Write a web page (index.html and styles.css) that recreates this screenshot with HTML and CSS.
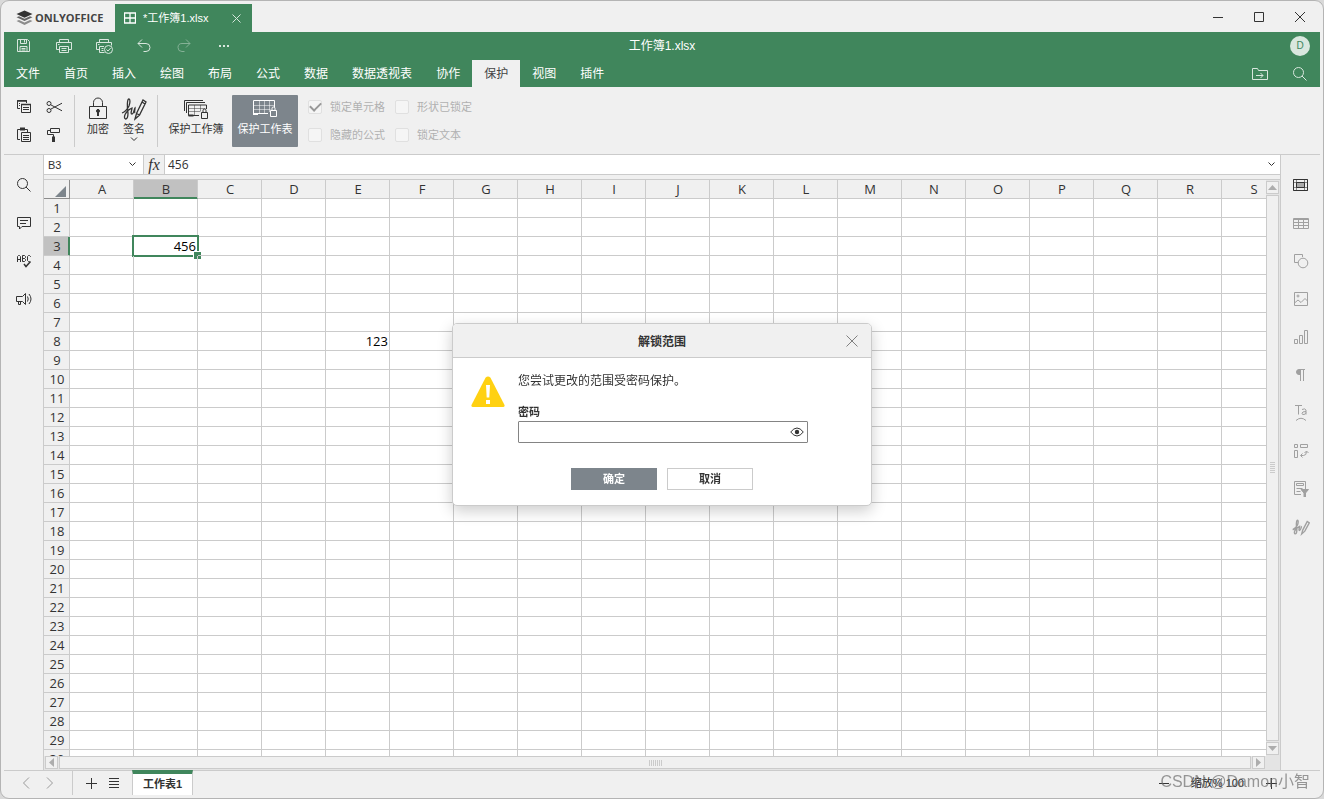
FILE: index.html
```html
<!DOCTYPE html>
<html lang="zh-CN">
<head>
<meta charset="utf-8">
<title>工作簿1.xlsx</title>
<link rel="stylesheet" href="styles.css">
</head>
<body>
<div class="window">
  <header class="titlebar">
    <div class="brand">
      <svg width="17" height="16" viewBox="0 0 17 16"><path d="M8.500 0.500 16.500 4 8.500 7.800 0.500 4z" fill="#333"/><path d="M0.500 7.300 3 6.200l5.500 2.500L14 6.200l2.500 1.100-8 3.800z" fill="#666"/><path d="M0.500 11 3 9.900l5.500 2.500L14 9.900l2.500 1.100-8 3.900z" fill="#8c8c8c"/></svg>
      <span>ONLYOFFICE</span>
    </div>
    <div class="doc-tab">
      <svg width="12" height="12" viewBox="0 0 12 12" fill="none" stroke="#fff"><path d="M.5 1h11v10H.5zM6 1v10M.5 6h11" stroke-width="1.300"/></svg>
      <span>*工作簿1.xlsx</span>
      <button class="tab-close" aria-label="关闭标签"><svg width="9" height="9" viewBox="0 0 9 9" fill="none" stroke="#d5e6dc"><path d="M.5.5l8 8M8.500.5l-8 8"/></svg></button>
    </div>
    <div class="win-controls">
      <button aria-label="最小化"><svg width="12" height="12" viewBox="0 0 12 12" fill="none" stroke="#333"><path d="M1 6.500h10"/></svg></button>
      <button aria-label="最大化"><svg width="12" height="12" viewBox="0 0 12 12" fill="none" stroke="#333"><path d="M1.500 1.500h9v9h-9z"/></svg></button>
      <button aria-label="关闭"><svg width="12" height="12" viewBox="0 0 12 12" fill="none" stroke="#333"><path d="M1 1l10 10M11 1L1 11"/></svg></button>
    </div>
  </header>

  <div class="ribbon-head">
    <div class="quick-row">
      <div class="quick-tools">
        <button aria-label="保存"><svg width="18" height="16" viewBox="0 0 18 16"><path d="M2.500 1.500h10l2 2v10h-12zM5.500 1.500v4h6v-4M9.500 2v2.500M5 13.500v-5h7v5M6.500 10.500h4M6.500 12h4"/></svg></button>
        <button aria-label="打印"><svg width="18" height="16" viewBox="0 0 18 16"><path d="M4.500 4.500v-3h9v3M4.500 11.500h-3v-7h15v7h-3M4.500 8.500h9v6h-9zM3 6.500h1.500M6.500 10.500h5M6.500 12.500h5"/></svg></button>
        <button aria-label="快速打印"><svg width="18" height="16" viewBox="0 0 18 16"><path d="M4.500 4.500v-3h9v3M4.500 11.500h-3v-7h15v3M9 8.500H4.500v6h5M3 6.500h1.500M6.500 10.500h2M6.500 12.500h2"/><circle cx="13.500" cy="11.500" r="4"/><path d="M11.500 11.500l1.500 1.500 2.700-3"/></svg></button>
        <button aria-label="撤消"><svg width="18" height="16" viewBox="0 0 18 16"><path d="M7 1.500 3 5.500l4 4M3 5.500h8a4 4 0 0 1 4 4v0a4 4 0 0 1-4 4H8.500"/></svg></button>
        <button class="dim" aria-label="重做"><svg width="18" height="16" viewBox="0 0 18 16"><path d="M11 1.500l4 4-4 4M15 5.500H7a4 4 0 0 0-4 4v0a4 4 0 0 0 4 4h2.500"/></svg></button>
        <button aria-label="更多"><svg width="18" height="16" viewBox="0 0 18 16"><path d="M4 8h2M8 8h2M12 8h2" stroke-width="2"/></svg></button>
      </div>
      <div class="doc-title">工作簿1.xlsx</div>
      <div class="user"><span class="avatar">D</span></div>
    </div>
    <nav class="menu-row">
      <button>文件</button><button>首页</button><button>插入</button><button>绘图</button><button>布局</button><button>公式</button><button>数据</button><button>数据透视表</button><button>协作</button><button class="active">保护</button><button>视图</button><button>插件</button>
      <div class="menu-tools">
        <button aria-label="打开文件位置"><svg width="18" height="16" viewBox="0 0 18 16"><path d="M1.500 13.500v-11h5l1 2h9v9zM5 9.500h7M9.500 7l2.500 2.500L9.500 12"/></svg></button>
        <button aria-label="查找"><svg width="16" height="16" viewBox="0 0 16 16"><circle cx="6.500" cy="6.500" r="5"/><path d="M10 10l4.500 4.500"/></svg></button>
      </div>
    </nav>
  </div>

  <div class="toolbar">
    <div class="clip-group">
      <button aria-label="复制"><svg width="16" height="16" viewBox="0 0 16 16"><path d="M4 9.500H1.500v-8h9V4M3 4.500h1M3 6.500h1M5.500 5.500h9v8h-9zM7 8.500h6M7 10.500h6"/><path d="M1 2h10M5 5.500h10" stroke-width="1.500"/></svg></button>
      <button aria-label="剪切"><svg width="16" height="16" viewBox="0 0 16 16"><circle cx="3" cy="4.500" r="2"/><circle cx="3" cy="11.500" r="2"/><path d="M4.700 5.800 16 11.800M4.700 10.200 16 4.200"/></svg></button>
      <button aria-label="粘贴"><svg width="16" height="16" viewBox="0 0 16 16"><path d="M4 12.500H1.500v-10h10V5M5.500 5.500h9v9h-9zM7 8.500h6M7 10.500h6M7 12.500h6"/><path d="M4 2h5" stroke-width="3"/></svg></button>
      <button aria-label="复制样式"><svg width="16" height="16" viewBox="0 0 16 16"><path d="M4.500 1.500h9v4h-9zM4 3.500H1.500v4h6V10"/><path d="M7.500 9.500v5.500" stroke-width="3"/></svg></button>
    </div>
    <div class="tool-group">
      <button class="tool narrow"><svg width="20" height="24" viewBox="0 0 20 24"><path d="M1.500 9.500h17v12h-17zM5.500 9V5.500a4.500 4.500 0 0 1 9 0V9"/><path d="M10 12v7" stroke-width="2"/><circle cx="10" cy="14" r="1.500" fill="#333"/></svg><span>加密</span></button>
      <button class="tool narrow"><svg width="26" height="24" viewBox="0 0 26 24"><path stroke-width="1.300" d="M1 16c3-1 5-3 7-7 1.500-4 1-7 0-7-2 0-2 8-1 14 0 3-1 6-2.500 6C2 21 4 14 11 11c0 2-2 6 0 6s2-5 3-6c0 2-1 4 0 5M14 22l1.500-5.500L22 3l3 2-6.500 13zM21 5l3 2M15.500 16.500l3 1.500"/></svg><span>签名</span><svg width="8" height="5" viewBox="0 0 8 5"><path d="M1 .5l3 3 3-3"/></svg></button>
    </div>
    <div class="tool-group wide-group">
      <button class="tool"><svg width="28" height="24" viewBox="0 0 28 24"><path d="M2.500 14V3.500H21M4.500 16V5.500H23M17 18.500H6.500V8h18v4"/><path d="M6.500 11.500h17M6.500 14.500h12M12.500 8v10M18.500 8v6" opacity=".5"/><path d="M19.500 15.500h6v6h-6zM21 15.500v-2a1.500 1.500 0 0 1 3 0v2"/><path d="M6.500 18.500h5" stroke-width="2"/></svg><span>保护工作簿</span></button>
      <button class="tool pressed"><svg width="28" height="24" viewBox="0 0 28 24"><path d="M3 8.500h20M2.500 12.500h17M8.500 4v12M13.500 4v13M18.500 4v11" opacity=".5"/><path d="M17 16.500H2.500v-13h21v7M19.500 13.500h6v6h-6zM21 13.500v-2a1.500 1.500 0 0 1 3 0v2"/><path d="M2 17h5" stroke-width="2"/></svg><span>保护工作表</span></button>
    </div>
    <div class="checks">
      <label><input type="checkbox" checked disabled>锁定单元格</label>
      <label><input type="checkbox" disabled>形状已锁定</label>
      <label><input type="checkbox" disabled>隐藏的公式</label>
      <label><input type="checkbox" disabled>锁定文本</label>
    </div>
  </div>

  <div class="workspace">
    <aside class="side left">
      <button aria-label="查找"><svg width="16" height="16" viewBox="0 0 16 16"><circle cx="6.500" cy="6.500" r="5"/><path d="M10 10l4.500 4.500"/></svg></button>
      <button aria-label="批注"><svg width="16" height="16" viewBox="0 0 16 16"><path d="M1.500 2.500h13v9H6L3.500 14v-2.500h-2zM4 5.500h8M4 8.500h6"/></svg></button>
      <button aria-label="拼写检查"><svg width="16" height="16" viewBox="0 0 16 16"><path d="M1.500 9V3.500l1-1h1l1 1V9M1.500 6.500h3M6.500 2.500v6h2l1-1v-1l-1-1 1-1v-1l-1-1zM6.500 5.500h2M14.500 4v-.5l-1-1h-1l-1 1v4l1 1h1"/><path stroke-width="1.500" d="M8 11l2 2.500 4.500-5"/></svg></button>
      <button aria-label="反馈"><svg width="16" height="16" viewBox="0 0 16 16"><path d="M.5 5.500h6l3-3v11l-3-3h-6zM2.500 10.500v3h2v-3M11.500 5.500q1.500 2.500 0 5M13 3q4 5 0 10"/></svg></button>
    </aside>

    <main class="center">
      <div class="formula-bar">
        <div class="name-box"><input aria-label="名称框" value="B3"><svg width="7" height="5" viewBox="0 0 7 5"><path d="M.5.5l3 3 3-3"/></svg></div>
        <button class="fx">fx</button>
        <input class="formula" aria-label="编辑栏" value="456">
        <button class="expand" aria-label="展开编辑栏"><svg width="7" height="5" viewBox="0 0 7 5"><path d="M.5.5l3 3 3-3"/></svg></button>
      </div>
      <div class="sheet-area">
        <div class="grid-view"><table class="grid" id="grid"></table></div>
        <div class="vscroll">
          <button aria-label="向上滚动"><svg width="9" height="5" viewBox="0 0 9 5"><path d="M0 5 4.500 0 9 5z"/></svg></button>
          <div class="thumb"><span class="grip"></span></div>
          <button aria-label="向下滚动"><svg width="9" height="5" viewBox="0 0 9 5"><path d="M0 0h9L4.500 5z"/></svg></button>
        </div>
        <div class="hscroll">
          <button aria-label="向左滚动"><svg width="5" height="9" viewBox="0 0 5 9"><path d="M5 0v9L0 4.500z"/></svg></button>
          <div class="thumb"><span class="grip"></span></div>
          <button aria-label="向右滚动"><svg width="5" height="9" viewBox="0 0 5 9"><path d="M0 0v9l5-4.500z"/></svg></button>
        </div>
      </div>
    </main>

    <aside class="side right">
      <button class="on" aria-label="单元格设置"><svg width="16" height="16" viewBox="0 0 16 16"><path d="M.5 2.500h14v11H.5zM3.500 2.500v11M11.500 2.500v11M.5 5.500h14M.5 10.500h14" stroke-opacity=".55"/><path d="M.5 2.500h14v11H.5z"/><path d="M3.500 5.500h8v5h-8z" fill="#aaa"/></svg></button>
      <button aria-label="表格设置"><svg width="16" height="16" viewBox="0 0 16 16"><path d="M.5 3.500h15v10H.5zM.5 7.500h15M.5 10.500h15M5.500 3.500v10M10.500 3.500v10M.5 4.500h15"/></svg></button>
      <button aria-label="形状设置"><svg width="16" height="16" viewBox="0 0 16 16"><path d="M5 9.500H1.500v-8h8V4"/><circle cx="10" cy="10" r="4.800"/></svg></button>
      <button aria-label="图像设置"><svg width="16" height="16" viewBox="0 0 16 16"><path d="M1.500 1.500h13v13h-13zM1.500 12l3.500-3 3 2.500 4-4 2.500 2.500"/><circle cx="5" cy="5" r="1"/></svg></button>
      <button aria-label="图表设置"><svg width="16" height="16" viewBox="0 0 16 16"><path d="M1.500 10.500h3v4h-3zM6.500 6.500h3v8h-3zM11.500 1.500h3v13h-3z"/></svg></button>
      <button aria-label="段落设置"><svg width="16" height="16" viewBox="0 0 16 16"><path d="M7.500 2v12M10.500 2v12M6 2.500h6"/><path d="M7.500 2.500v5H6a2.500 2.500 0 0 1 0-5z" fill="#a0a0a0"/></svg></button>
      <button aria-label="艺术字设置"><svg width="16" height="18" viewBox="0 0 16 18"><path d="M2 1.500h7M5.500 1.500v9M9 5.500q3-1.500 4 .5v4.500M13 7.500q-4 0-4 1.700t2 1.300q2-.5 2-2M3 16.500q5-4.500 10 0"/></svg></button>
      <button aria-label="数据透视表设置"><svg width="16" height="16" viewBox="0 0 16 16"><path d="M1.500 1.500h3v3h-3zM7.500 1.500h7v3h-7zM1.500 7.500h3v7h-3zM8 12.500h2.500q3 0 3-4M9.500 10.500l-2 2 2 2M11.500 10l2-2 2 2"/></svg></button>
      <button aria-label="切片器设置"><svg width="16" height="16" viewBox="0 0 16 16"><path d="M8 13.500H1.500v-13h11V8M3.500 2.500h7v2h-7zM3.500 7.500h6M3.500 10.500h4"/><path d="M8 8.500h7.500L12.500 12v4h-1.500v-4z" fill="#a0a0a0"/></svg></button>
      <button aria-label="签名设置"><svg width="18" height="18" viewBox="0 0 26 24"><path stroke-width="2" d="M1 16c3-1 5-3 7-7 1.500-4 1-7 0-7-2 0-2 8-1 14 0 3-1 6-2.500 6C2 21 4 14 11 11c0 2-2 6 0 6s2-5 3-6M14 22l1.500-5.500L22 4l3 2-6.500 12z"/></svg></button>
    </aside>
  </div>

  <footer class="statusbar">
    <div class="sheet-nav">
      <button aria-label="上一工作表"><svg width="8" height="12" viewBox="0 0 8 12"><path d="M7 .5 1.500 6 7 11.500"/></svg></button>
      <button aria-label="下一工作表"><svg width="8" height="12" viewBox="0 0 8 12"><path d="M1 .5 6.500 6 1 11.500"/></svg></button>
    </div>
    <div class="sheet-add">
      <button aria-label="添加工作表"><svg width="12" height="12" viewBox="0 0 12 12"><path d="M6.500 1v11M1 6.500h11"/></svg></button>
      <button aria-label="工作表列表"><svg width="12" height="12" viewBox="0 0 12 12"><path d="M1 1.500h10M1 4.500h10M1 7.500h10M1 10.500h10"/></svg></button>
    </div>
    <button class="sheet-tab">工作表1</button>
    <div class="zoom">
      <button aria-label="缩小"><svg width="12" height="12" viewBox="0 0 12 12"><path d="M1 6.500h10"/></svg></button>
      <span>缩放% 100</span>
      <button aria-label="放大"><svg width="12" height="12" viewBox="0 0 12 12"><path d="M6.500 1v11M1 6.500h11"/></svg></button>
    </div>
  </footer>
</div>

<div class="overlay">
  <form class="dialog" role="dialog" aria-labelledby="dlg-title">
    <div class="dialog-head">
      <h2 id="dlg-title">解锁范围</h2>
      <button type="button" class="dialog-close" aria-label="关闭"><svg width="12" height="12" viewBox="0 0 12 12" fill="none" stroke="#808080"><path d="M.5.5l11 11M11.500.5l-11 11"/></svg></button>
    </div>
    <div class="dialog-body">
      <svg class="warn" width="36" height="32" viewBox="0 0 36 32"><path d="M15.500 1.800q2.500-2.600 5 0L34.500 29q.5 2-1.500 2H3q-2 0-1.500-2z" fill="#ffd112"/><path d="M16 9h4l-.7 12.500h-2.600zM16 24h4v4h-4z" fill="#fff"/></svg>
      <div class="dialog-fields">
        <p>您尝试更改的范围受密码保护。</p>
        <label for="pwd">密码</label>
        <div class="pwd-box"><input type="password" id="pwd"><button type="button" aria-label="显示密码"><svg width="14" height="10" viewBox="0 0 14 10" fill="none" stroke="#333"><path d="M.7 5q6.300-8 12.600 0-6.300 8-12.600 0z"/><circle cx="7" cy="5" r="2.200" fill="#333" stroke="none"/></svg></button></div>
      </div>
    </div>
    <div class="dialog-actions"><button class="primary">确定</button><button type="button">取消</button></div>
  </form>
</div>
<div class="watermark">CSDN @Damon小智</div>
<script src="grid.js"></script>
</body>
</html>
```
FILE: styles.css
```css
* { box-sizing: border-box; }
body {
  margin: 0;
  background: #d9d9d9;
  color: #333;
  font: 11px/16px "Liberation Sans", "Noto Sans CJK SC", sans-serif;
}
button {
  display: flex;
  align-items: center;
  justify-content: center;
  margin: 0;
  padding: 0;
  border: 0;
  background: none;
  color: inherit;
  font: inherit;
}
input { min-width: 0; margin: 0; padding: 0; border: 0; outline: 0; background: none; color: inherit; font: inherit; }
svg { display: block; flex: none; }

.window {
  display: flex;
  flex-direction: column;
  height: 100vh;
  padding: 0 3px 3px;
  border: 1px solid #b4b4b4;
  border-radius: 9px;
  background: #f0f0f0;
}

.titlebar { display: flex; height: 31px; flex: none; }
.brand { display: flex; align-items: center; gap: 2px; width: 111px; padding: 2px 0 0 12px; color: #444; font: bold 11px/16px "Open Sans", sans-serif; }
.doc-tab { display: flex; align-items: center; width: 137px; margin-top: 3px; padding: 0 6px 0 9px; background: #40865c; color: #fff; }
.doc-tab span { margin: 0 auto 0 7px; }
.tab-close { width: 19px; height: 19px; }
.win-controls { display: flex; margin-left: auto; padding-top: 1px; }
.win-controls button { width: 41px; padding-left: 1px; }

.ribbon-head { flex: none; background: #40865c; color: #fff; font-size: 12px; }
.ribbon-head svg { fill: none; stroke: #d9e7de; }
.quick-row { display: grid; grid-template-columns: 1fr auto 1fr; align-items: center; height: 28px; }
.quick-tools { display: flex; }
.quick-tools button { width: 40px; height: 28px; }
.quick-tools .dim { opacity: .45; }
.user { display: flex; justify-content: flex-end; padding-right: 10px; }
.avatar { width: 20px; border-radius: 50%; background: #d9e7de; color: #40865c; font-size: 10px; line-height: 20px; text-align: center; }
.menu-row { display: flex; height: 27px; }
.menu-row > button { padding: 0 12px; }
.menu-row .active { background: #f0f0f0; color: #444; }
.menu-tools { display: flex; margin-left: auto; }
.menu-tools button { width: 40px; padding-top: 1px; }

.toolbar { display: flex; flex: none; height: 68px; padding: 8px 0 7px; border-bottom: 1px solid #cbcbcb; }
.toolbar svg, .side svg, .name-box svg, .expand svg, .statusbar svg { fill: none; stroke: #333; }
.clip-group { display: grid; grid-template-columns: 30px 30px; grid-auto-rows: 28px; width: 71px; padding-left: 5px; align-content: center; border-right: 1px solid #cbcbcb; }
.tool-group { display: flex; width: 83px; padding: 0 5px; border-right: 1px solid #cbcbcb; }
.wide-group { width: auto; gap: 3px; padding: 0 10px 0 5px; border: 0; }
.tool { flex-direction: column; justify-content: flex-start; width: 66px; padding-top: 2px; }
.tool.narrow { width: 36px; }
.tool span { line-height: 16px; }
.tool.pressed { border-radius: 1px; background: #7d858c; color: #fff; }
.toolbar .pressed svg { stroke: #fff; }
.checks { display: grid; grid-template-columns: 87px auto; grid-auto-rows: 28px; align-content: center; color: #b0b0b0; }
.checks label { display: flex; align-items: center; gap: 8px; }
.checks input { appearance: none; display: grid; place-items: center; width: 14px; height: 14px; border: 1px solid #e0e0e0; border-radius: 2px; background: #f5f5f5; }
.checks input:checked::before { content: ""; width: 9px; height: 5px; margin-bottom: 3px; border: solid #999; border-width: 0 0 2px 2px; transform: rotate(-45deg); }

.workspace { display: flex; flex: 1; min-height: 0; }
.side { display: flex; flex: none; flex-direction: column; width: 40px; padding-top: 11px; }
.side button { height: 38px; padding-left: 1px; }
.side.left { border-right: 1px solid #cbcbcb; }
.side.right { border-left: 1px solid #cbcbcb; }
.side.right svg { stroke: #a0a0a0; }
.side.right .on svg { stroke: #333; }

.center { display: flex; flex: 1; flex-direction: column; min-width: 0; }
.formula-bar { display: flex; flex: none; height: 20px; border-bottom: 1px solid #cbcbcb; background: #fff; }
.name-box { display: flex; align-items: center; width: 100px; padding: 0 7px 0 4px; border-right: 1px solid #cbcbcb; }
.name-box input { flex: 1; }
.fx { width: 21px; border-right: 1px solid #cbcbcb; background: #f0f0f0; font: italic 16px/18px "Liberation Serif", serif; }
.formula { flex: 1; padding-left: 3px; font: 12px/18px "Open Sans", sans-serif; }
.expand { width: 17px; }

.sheet-area { display: grid; grid-template: minmax(0, 1fr) 14px / minmax(0, 1fr) 14px; flex: 1; min-height: 0; margin-top: 4px; border-top: 1px solid #cbcbcb; background: #e4e4e4; }
.grid-view { overflow: hidden; background: #fff; }
.grid { width: 1242px; border-spacing: 0; table-layout: fixed; color: #000; font: 13px/18px "Open Sans", sans-serif; }
.grid th, .grid td { height: 19px; padding: 0; border: solid #cbcbcb; border-width: 0 1px 1px 0; }
.grid th { padding-left: 1px; background: #f0f0f0; color: #333; font-weight: normal; text-align: center; }
.grid th:first-child { width: 26px; }
.grid td { position: relative; padding-right: 1px; text-align: right; }
.grid thead .corner { padding: 4px 3px 0 11px; border-color: #8c8c8c; }
.corner svg { fill: #7d858c; }
.grid .picked { background: #c1c1c1; }
.grid thead .picked { border-bottom-color: #40865c; box-shadow: inset 0 -1px #40865c; }
.grid tbody .picked { border-right-color: #40865c; box-shadow: inset -1px 0 #40865c; }
.cursor { position: absolute; inset: -2px; border: 2px solid #40865c; }
.cursor::after { content: ""; position: absolute; right: -4px; bottom: -4px; width: 7px; height: 7px; border: solid #fff; border-width: 1px 0 0 1px; background: #40865c; }

.vscroll { display: flex; flex-direction: column; gap: 1px; padding: 1px 1px 1px 0; }
.hscroll { display: flex; gap: 1px; padding: 0 1px 1px; }
.vscroll button, .hscroll button, .thumb { flex: none; width: 13px; height: 13px; border: 1px solid #cbcbcb; background: #f0f0f0; }
.vscroll svg, .hscroll svg { fill: #adadad; }
.vscroll .thumb { display: grid; flex: 1; place-items: center; height: auto; }
.hscroll .thumb { display: grid; flex: 1; place-items: center; width: auto; }
.grip { width: 5px; height: 12px; background: repeating-linear-gradient(#cbcbcb 0 1px, transparent 1px 2px); }
.hscroll .grip { width: 13px; height: 6px; background: repeating-linear-gradient(90deg, #cbcbcb 0 1px, transparent 1px 2px); }

.statusbar { display: flex; flex: none; height: 25px; border-top: 1px solid #cbcbcb; }
.sheet-nav { display: flex; width: 69px; padding-left: 10px; border-right: 1px solid #cbcbcb; }
.sheet-nav button { width: 24px; }
.statusbar .sheet-nav svg { stroke: #999; }
.sheet-add { display: flex; width: 59px; padding-left: 7px; }
.sheet-add button { width: 23px; padding-right: 1px; }
.sheet-tab { margin-top: -1px; padding: 0 10px 2px; border: solid #cbcbcb; border-width: 0 1px; border-top: 4px solid #40865c; background: #fff; font-weight: bold; }
.zoom { display: flex; align-items: center; gap: 21px; margin-left: auto; padding-right: 43px; color: #222; }
.zoom button { width: 12px; }

.overlay { position: fixed; inset: 30px 0 0; display: grid; place-items: center; }
.dialog { width: 420px; border: 1px solid #cbcbcb; border-radius: 5px; background: #fff; box-shadow: 0 5px 15px rgba(0, 0, 0, .2); }
.dialog-head { display: grid; grid-template-columns: 36px 1fr 36px; align-items: center; height: 34px; border-bottom: 1px solid #cbcbcb; border-radius: 4px 4px 0 0; background: #f0f0f0; }
.dialog-head h2 { grid-column: 2; margin: 0; padding-top: 2px; font-size: 12px; line-height: 16px; text-align: center; }
.dialog-close { width: 34px; height: 32px; }
.dialog-body { display: flex; gap: 12px; padding: 15px 63px 0 17px; }
.warn { margin-top: 3px; }
.dialog-fields { flex: 1; }
.dialog-fields p { margin: 0 0 15px; font-size: 12px; line-height: 16px; }
.dialog-fields label { display: block; margin-bottom: 1px; font-weight: bold; }
.pwd-box { display: flex; height: 22px; border: 1px solid #848484; border-radius: 1px; }
.pwd-box input { flex: 1; padding: 0 4px; }
.pwd-box button { width: 20px; }
.dialog-actions { display: flex; justify-content: center; gap: 10px; padding: 25px 0 15px; }
.dialog-actions button { width: 86px; height: 22px; border: 1px solid #cbcbcb; font-weight: bold; }
.dialog-actions .primary { border-color: #7d858c; background: #7d858c; color: #fff; }

.watermark { position: fixed; right: 14px; bottom: 5px; color: rgba(110, 110, 110, .7); font: 16px/24px "Liberation Sans", "Noto Sans CJK SC", sans-serif; }
```
FILE: grid.js
```js
const columns = "ABCDEFGHIJKLMNOPQRS".split("");
const values = { B3: "456", E8: "123" };
const selected = { column: "B", row: 3 };
const rowCount = 30;

const head = columns
  .map((c) => `<th scope="col"${c === selected.column ? ' class="picked"' : ""}>${c}</th>`)
  .join("");

let body = "";
for (let r = 1; r <= rowCount; r++) {
  body += `<tr><th scope="row"${r === selected.row ? ' class="picked"' : ""}>${r}</th>`;
  for (const c of columns) {
    const active = c === selected.column && r === selected.row;
    body += `<td>${values[c + r] || ""}${active ? '<span class="cursor"></span>' : ""}</td>`;
  }
  body += "</tr>";
}

document.getElementById("grid").innerHTML =
  `<thead><tr><th class="corner"><svg width="11" height="11" viewBox="0 0 11 11"><path d="M11 0v11H0z"/></svg></th>${head}</tr></thead><tbody>${body}</tbody>`;
```
